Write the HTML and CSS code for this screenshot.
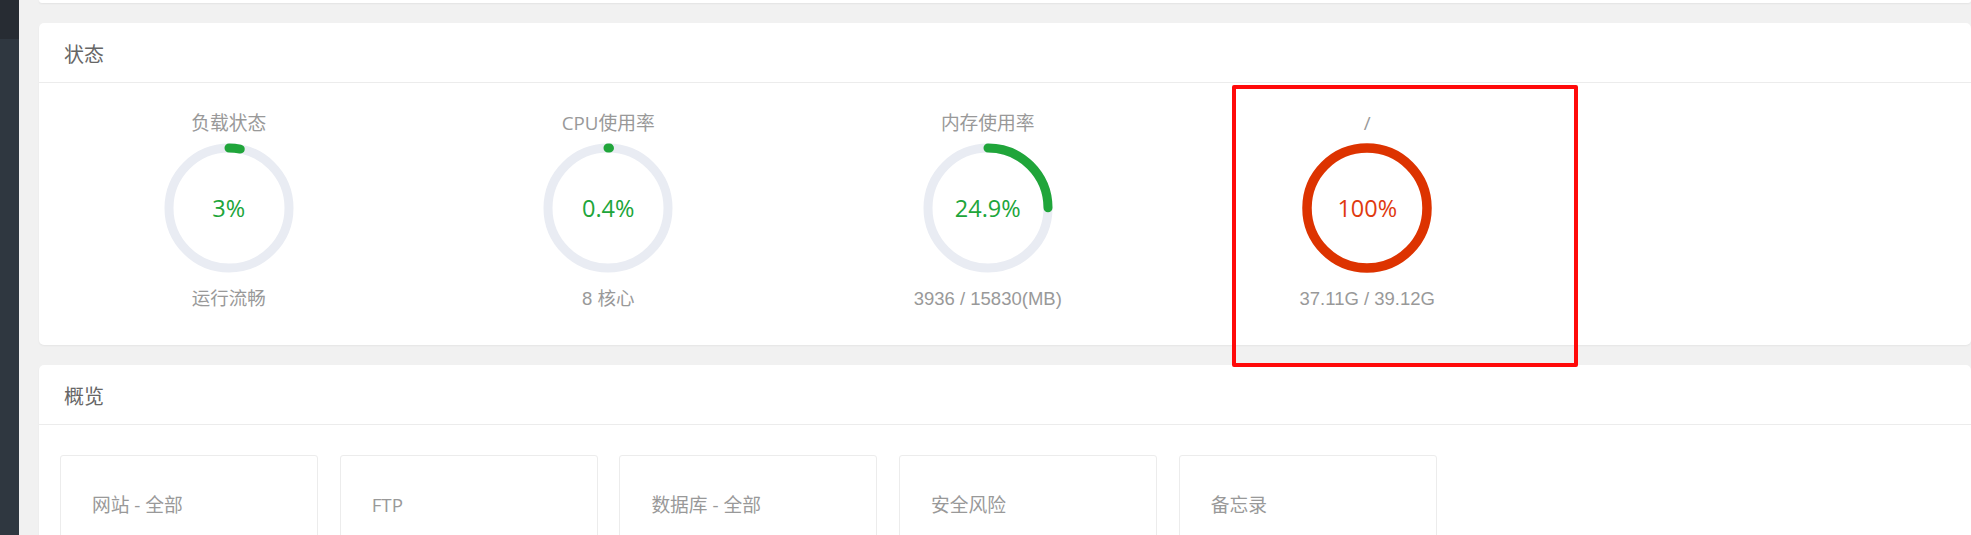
FILE: index.html
```html
<!DOCTYPE html>
<html lang="zh-CN">
<head>
<meta charset="utf-8">
<title>状态</title>
<link rel="stylesheet" href="styles.css">
</head>
<body>
<div class="layout">
  <aside class="sidebar"><div class="sidebar-top"></div></aside>
  <main class="main">
    <div class="topcard"></div>

    <section class="card status">
      <header class="card-head">状态</header>
      <div class="gauges">
        <div class="gauge">
          <div class="g-title">负载状态</div>
          <div class="ring">
            <svg width="130" height="130" viewBox="0 0 130 130">
              <circle class="track" cx="65" cy="65" r="60"/>
              <circle class="arc ok" cx="65" cy="65" r="60" stroke-dasharray="11.31 400" transform="rotate(-90 65 65)"/>
            </svg>
            <span class="val ok-t">3%</span>
          </div>
          <div class="g-sub">运行流畅</div>
        </div>
        <div class="gauge">
          <div class="g-title">CPU使用率</div>
          <div class="ring">
            <svg width="130" height="130" viewBox="0 0 130 130">
              <circle class="track" cx="65" cy="65" r="60"/>
              <circle class="arc ok" cx="65" cy="65" r="60" stroke-dasharray="1.51 400" transform="rotate(-90 65 65)"/>
            </svg>
            <span class="val ok-t">0.4%</span>
          </div>
          <div class="g-sub">8 核心</div>
        </div>
        <div class="gauge">
          <div class="g-title">内存使用率</div>
          <div class="ring">
            <svg width="130" height="130" viewBox="0 0 130 130">
              <circle class="track" cx="65" cy="65" r="60"/>
              <circle class="arc ok" cx="65" cy="65" r="60" stroke-dasharray="93.87 400" transform="rotate(-90 65 65)"/>
            </svg>
            <span class="val ok-t">24.9%</span>
          </div>
          <div class="g-sub">3936 / 15830(MB)</div>
        </div>
        <div class="gauge">
          <div class="g-title">/</div>
          <div class="ring">
            <svg width="130" height="130" viewBox="0 0 130 130">
              <circle class="arc bad" cx="65" cy="65" r="60"/>
            </svg>
            <span class="val bad-t">100%</span>
          </div>
          <div class="g-sub">37.11G / 39.12G</div>
        </div>
      </div>
    </section>

    <section class="card overview">
      <header class="card-head">概览</header>
      <div class="boxes">
        <div class="box">网站 - 全部</div>
        <div class="box">FTP</div>
        <div class="box">数据库 - 全部</div>
        <div class="box">安全风险</div>
        <div class="box">备忘录</div>
      </div>
    </section>
  </main>
</div>
<div class="highlight"></div>
</body>
</html>
```
FILE: styles.css
```css
html, body {
  margin: 0;
  padding: 0;
}
body {
  background: #f1f1f1;
  font-family: "Open Sans", "Noto Sans CJK SC", sans-serif;
  overflow: hidden;
  height: 535px;
}
.layout {
  display: flex;
  height: 535px;
}
.sidebar {
  width: 19px;
  flex: none;
  background: #2f3740;
}
.sidebar-top {
  height: 39px;
  background: #272c33;
}
.main {
  flex: 1;
  padding-left: 20px;
  display: flex;
  flex-direction: column;
  gap: 20px;
  min-width: 0;
}
.topcard {
  height: 3px;
  background: #fff;
  border-radius: 0 0 4px 4px;
  box-shadow: 0 1px 2px rgba(0,0,0,0.06);
  flex: none;
}
.card {
  background: #fff;
  border-radius: 5px;
  box-shadow: 0 1px 2px rgba(0,0,0,0.05);
  flex: none;
}
.card-head {
  height: 55px;
  padding: 4px 25px 0;
  line-height: 55px;
  font-size: 20px;
  color: #666;
  border-bottom: 1px solid #ececec;
}
.status {
  height: 322px;
}
.gauges {
  display: flex;
  padding-top: 28px;
}
.gauge {
  width: 379.5px;
  flex: none;
  display: flex;
  flex-direction: column;
  align-items: center;
}
.g-title,
.g-sub {
  font-size: 18.75px;
  line-height: 24px;
  color: #999;
  white-space: nowrap;
}
.g-sub {
  font-family: "Liberation Sans", "Noto Sans CJK SC", sans-serif;
  font-size: 18.5px;
  margin-top: 14px;
}
.ring {
  display: grid;
  place-items: center;
  margin-top: 8px;
  width: 130px;
  height: 130px;
}
.ring > * {
  grid-area: 1 / 1;
}
.ring svg {
  display: block;
}
.track {
  fill: none;
  stroke: #e9ecf3;
  stroke-width: 9;
}
.arc {
  fill: none;
  stroke-width: 9;
  stroke-linecap: round;
}
.arc.ok { stroke: #20a53a; }
.arc.bad { stroke: #dd3300; stroke-width: 9.5; }
.val {
  font-size: 23.5px;
  line-height: 30px;
}
.ok-t { color: #20a53a; }
.bad-t { color: #e03a10; }
.overview {
  height: 400px;
}
.boxes {
  display: flex;
  gap: 21.7px;
  padding: 30px 21px 0;
}
.box {
  width: 258px;
  height: 160px;
  flex: none;
  border: 1px solid #ececec;
  border-radius: 3px;
  padding: 36px 31px 0;
  box-sizing: border-box;
  font-size: 18.75px;
  line-height: 26px;
  color: #999;
  white-space: nowrap;
}
.highlight {
  position: absolute;
  left: 1232px;
  top: 85px;
  width: 338px;
  height: 274px;
  border: 4px solid #ff0a0a;
  border-radius: 2px;
  pointer-events: none;
}
```
